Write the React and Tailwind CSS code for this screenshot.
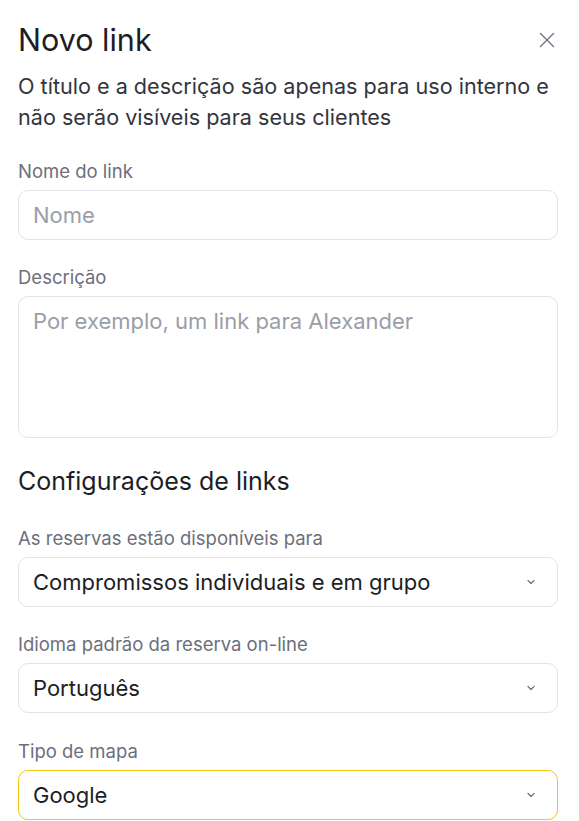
import React from 'react';

const Chevron = () => (
    <svg width="12" height="12" viewBox="0 0 12 12" fill="none" className="text-gray-500">
        <path d="M3 4.5L6 7.5L9 4.5" stroke="currentColor" strokeWidth="1.2" strokeLinecap="round" strokeLinejoin="round" />
    </svg>
);

const Field = ({ label, children, className = '' }) => (
    <div className={className}>
        <div className="text-[18.5px] leading-6 text-[#6b6f7b] mb-[7px]">{label}</div>
        {children}
    </div>
);

const Select = ({ value, active }) => (
    <div
        className={`h-[50px] rounded-[10px] border bg-white flex items-center justify-between pl-[14px] pr-[20px] ${
            active ? 'border-[#f5c518]' : 'border-[#e3e4ea]'
        }`}
    >
        <span className="text-[22px] text-[#1c1e24]">{value}</span>
        <Chevron />
    </div>
);

export default function App() {
    return (
        <div className="min-h-screen bg-white pl-[18px] pr-[21px] pt-[22px] font-['Inter',sans-serif]">
            {/* Header */}
            <div className="flex items-center justify-between">
                <h1 className="text-[30.5px] leading-9 text-[#1c1e24] font-normal">Novo link</h1>
                <button className="mr-[3px] text-gray-500">
                    <svg width="16" height="16" viewBox="0 0 16 16" fill="none">
                        <path d="M1.5 1.5L14.5 14.5M14.5 1.5L1.5 14.5" stroke="currentColor" strokeWidth="1.3" strokeLinecap="round" />
                    </svg>
                </button>
            </div>
            <p className="mt-[13px] text-[21.6px] leading-[31px] text-[#33353d]">
                O título e a descrição são apenas para uso interno e não serão visíveis para seus clientes
            </p>

            {/* Name & description */}
            <Field label="Nome do link" className="mt-[26px]">
                <div className="h-[50px] rounded-[10px] border border-[#e3e4ea] flex items-center px-[14px]">
                    <span className="text-[22px] text-[#9a9ea8]">Nome</span>
                </div>
            </Field>
            <Field label="Descrição" className="mt-[25px]">
                <div className="h-[142px] rounded-[10px] border border-[#e3e4ea] px-[14px] pt-[9px]">
                    <span className="text-[22px] leading-[30px] text-[#9a9ea8]">Por exemplo, um link para Alexander</span>
                </div>
            </Field>

            {/* Settings */}
            <h2 className="mt-[27px] text-[25px] leading-8 text-[#1c1e24] font-normal">Configurações de links</h2>
            <Field label="As reservas estão disponíveis para" className="mt-[29px]">
                <Select value="Compromissos individuais e em grupo" />
            </Field>
            <Field label="Idioma padrão da reserva on-line" className="mt-[25px]">
                <Select value="Português" />
            </Field>
            <Field label="Tipo de mapa" className="mt-[26px]">
                <Select value="Google" active />
            </Field>
        </div>
    );
}
